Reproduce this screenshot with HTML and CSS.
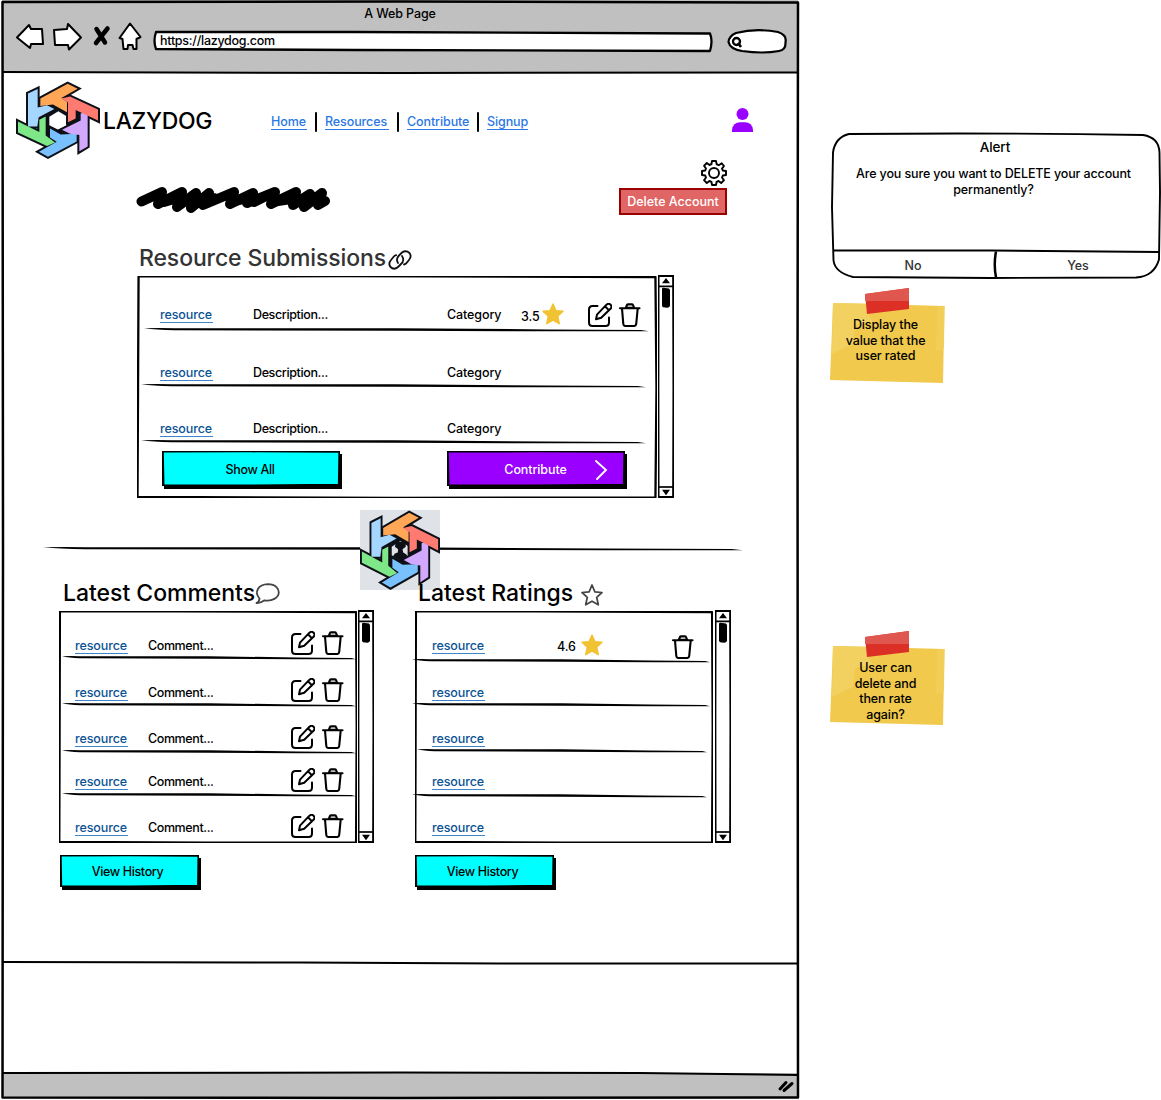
FILE: index.html
```html
<!DOCTYPE html>
<html lang="en">
<head>
<meta charset="utf-8">
<title>LAZYDOG</title>
<link rel="stylesheet" href="styles.css">
</head>
<body>
<svg class="defs" aria-hidden="true">
  <defs>
    <g id="arms">
      <path fill="#ffa657" d="M91 70 173 25 203 40 154 68 171 80V111L129 88 91 92Z"/>
      <path fill="#a5d6ff" d="M54 55 83 41V97L111 90 133 101 86 126 82 154H54Z"/>
      <path fill="#7ee787" d="M24 139 88 171V134L107 124V181L135 202 111 213 24 172Z"/>
      <path fill="#79c0ff" d="M120 160 152 178 200 176V199L114 245 87 230 140 200 120 187Z"/>
      <path fill="#d2a8ff" d="M212 115 233 110V214L208 229V180L180 176 156 164 212 136Z"/>
      <path fill="#ff7b72" d="M154 70 180 64 264 103V136L197 104V130L174 141V82Z"/>
    </g>
  </defs>
  <symbol id="logo" viewBox="18 17 252 235" preserveAspectRatio="none">
    <path fill="#0d1117" fill-rule="evenodd" d="M88 72 165 60 215 108 208 182 150 206 86 168Z M118 125V150L145 164 171 150V124L145 108Z"/>
    <use href="#arms" stroke="#0d1117" stroke-width="12"/>
    <use href="#arms"/>
  </symbol>
  <symbol id="edit" viewBox="0 0 24 24">
    <g fill="none" stroke="#000" stroke-width="2" stroke-linecap="round" stroke-linejoin="round">
      <path d="M9.500 3H4.500Q1 3 1 6.500V19.500Q1 23 4.500 23H17.500Q21 23 21 19.500V14.500"/>
      <path d="M8 16.200 9 11.600 18.200 1.900Q20.700-.2 22.600 1.700 24.400 3.600 22.500 5.800L13.200 14.800Z M17 3.200 20.800 7.100"/>
    </g>
  </symbol>
  <symbol id="trash" viewBox="0 0 22 24">
    <g fill="none" stroke="#000" stroke-width="2.100" stroke-linecap="round" stroke-linejoin="round">
      <path d="M1 5.200H20.500M3 5.500 4.300 21Q4.500 23 6.500 23H15Q17 23 17.200 21L18.700 5.500"/>
      <path fill="#bbb" d="M6.800 5 8 2Q8.300 1.200 9.300 1.200H12.700Q13.700 1.200 14 2L15.200 5Z"/>
    </g>
  </symbol>
  <symbol id="star" viewBox="0 0 22 22">
    <path fill="#f1c232" stroke="#f1c232" stroke-width="1.400" stroke-linejoin="round" d="M11 1 13.900 7.600 21 8.300 15.700 13.200 17.300 20.700 11 17.100 4.700 20.700 6.300 13.200 1 8.300 8.100 7.600Z"/>
  </symbol>
  <symbol id="frame" viewBox="0 0 100 100" preserveAspectRatio="none">
    <path fill="none" stroke="#000" stroke-width="2.300" stroke-linejoin="round" vector-effect="non-scaling-stroke" d="M.3.2 40 .1 99.700.5 99.900 50 99.700 99.800 50 99.900.1 99.500.2 50Z"/>
  </symbol>
  <symbol id="bar" viewBox="0 0 100 100" preserveAspectRatio="none">
    <path fill="none" stroke="#000" stroke-width="2.100" stroke-linejoin="round" vector-effect="non-scaling-stroke" d="M3 .3 95 .4 97 50 95 99.600 3 99.500 2 50Z"/>
  </symbol>
  <symbol id="rule" viewBox="0 0 500 4" preserveAspectRatio="none">
    <path d="M0 .3Q10 0 30 .2L250 .3 400 1.400 492 1.900 500 3.200 400 3.300 250 2.700 30 2.300Q12 2 0 .3Z"/>
  </symbol>
  <symbol id="button" viewBox="0 0 100 100" preserveAspectRatio="none">
    <path fill="currentColor" stroke="#000" stroke-width="2.500" vector-effect="non-scaling-stroke" d="M.3 1 50 .3 99.800 1.500 99.500 97 50 99.300.7 98.500Z"/>
  </symbol>
  <symbol id="scroll-up" viewBox="0 0 16 36">
    <path fill="none" stroke="#000" stroke-width="1.700" d="M1 1H15M1 11.300H15"/>
    <path d="M4 8.200 8 3 12 8.200Z"/>
    <path d="M4 14Q4 12.600 5.500 12.700L11 13.400 12 15V31Q11 33 9 32.800L5 32.200 4 31Z"/>
  </symbol>
  <symbol id="scroll-down" viewBox="0 0 16 12">
    <path fill="none" stroke="#000" stroke-width="1.700" d="M1 1H15"/>
    <path d="M4 3.700H12L8 9.300Z"/>
  </symbol>
</svg>

<div class="browser">
  <svg class="browser-ink" viewBox="0 0 800 1100" aria-hidden="true">
    <g fill="none" stroke="#000" stroke-width="2.500" stroke-linejoin="round">
      <path d="M2.500 2 400 1.500 798 2.500 797.500 400 798 1097.500 400 1098 2.500 1097.500 3 550Z"/>
      <path stroke-width="2" d="M3 72 400 73 798 72.500"/>
      <path stroke-width="2" d="M3 962 300 962.500 500 963.500 798 963.500"/>
      <path stroke-width="2" d="M3 1073 400 1072.500 640 1073 798 1075"/>
    </g>
  </svg>
  <header class="chrome">
    <div class="title"><span class="t-page">A Web Page</span></div>
    <div class="controls">
      <svg class="tools" viewBox="0 0 128 30" aria-hidden="true">
        <g fill="#fff" stroke="#000" stroke-width="2" stroke-linejoin="round">
          <path d="M1 15.500 13 3 15 7 26 7 27 22 15 22 14 26Z"/>
          <path d="M38 8 51 7 52 2 65 15.500 53 27.500 52 23 39 23Z"/>
          <path d="M114 1.500 124.500 15 120.500 17 120.500 27 117.500 27 116.500 23 112 23 111.500 27 107.500 27 106.500 17 103.500 16Z"/>
        </g>
        <path fill="none" stroke="#000" stroke-width="4.500" stroke-linecap="round" d="M80.500 7 89 20.500M91.500 6.500 80 21"/>
      </svg>
      <div class="address">
        <svg class="ink" viewBox="0 0 558 20" aria-hidden="true"><path fill="#fff" stroke="#000" stroke-width="2.300" stroke-linejoin="round" d="M2 1 200 1 556 2.500Q559 10 556 20L200 19 2 18Q-1 10 2 1Z"/></svg>
        <span>https://lazydog.com</span>
      </div>
      <svg class="search" viewBox="0 0 60 25" aria-hidden="true">
        <path fill="#fff" stroke="#000" stroke-width="2.200" d="M8 4Q28-1 50 3 59 6 57.500 13 58 21 51 22 35 25 14 22 2 20 .500 13 1 7 8 4Z"/>
        <circle cx="8.500" cy="12.500" r="3.500" fill="none" stroke="#000" stroke-width="2.300"/><path stroke="#000" stroke-width="2.700" d="M10 14 13 18"/>
      </svg>
    </div>
  </header>

  <div class="masthead">
    <svg class="logo"><use href="#logo"/></svg>
    <span class="brand">LAZYDOG</span>
    <nav class="nav">
      <a class="home">Home</a><i></i><a class="res">Resources</a><i></i><a class="con">Contribute</a><i></i><a class="sign">Signup</a>
    </nav>
    <svg class="user" viewBox="0 0 21 24"><circle cx="10.500" cy="6" r="6"/><path d="M0 24V22Q1 14.300 8 14.300H13Q20 14.300 21 22V24Z"/></svg>
  </div>

  <div class="profile">
    <svg class="scribble" viewBox="0 0 196 30"><path fill="none" stroke="#000" stroke-width="10" stroke-linecap="round" stroke-linejoin="round" d="M5.500 16.500 26 7 22 19 46 7 41 22 60 8 55 23 73 8 67 20 98 7 94 19 117 8 111 18 139 7 135 19 160 7 157 20 174 9 168 22 186 8 182 20 189 16M28 17 38 14M46 16 60 17 78 13M100 16 107 14M118 17 128 12M142 16 155 14 172 16 184 16"/></svg>
    <div class="settings">
      <svg class="gear" viewBox="0 0 26 26"><g fill="none" stroke="#000" stroke-width="1.900" stroke-linejoin="round"><circle cx="13" cy="13" r="5"/><path d="M11 1H15L15.700 4.300 17.800 5.200 20.700 3.300 23 6 21 8.600 21.800 10.500 25 11V15L21.800 15.500 21 17.500 23 20.200 20.200 23 17.500 21 15.600 21.800 15 25H11L10.400 21.800 8.500 21 5.800 23 3 20.200 5 17.500 4.200 15.500 1 15V11L4.200 10.500 5 8.500 3 5.800 5.800 3 8.500 5 10.400 4.200Z"/></g></svg>
      <div class="delete">Delete Account</div>
    </div>
  </div>

  <section class="submissions">
    <h2 class="gray"><span class="t-sub">Resource Submissions</span>
      <svg class="link" viewBox="0 0 24 20"><g fill="none" stroke="#111" stroke-width="1.800" stroke-linecap="round"><path d="M10 13Q7.500 9 11 5.500L14 2.500Q18-.2 21.500 3 24 6.500 21 10L18 13.500Q17 14.300 16 14.500"/><path d="M14 6Q17 10.500 13 14L10 17Q6 20.500 2.500 17 0 13.500 3 10L6 6.300Q7 5.300 8.200 5.200"/></g></svg>
    </h2>
    <div class="pane">
      <div class="list wide">
        <svg class="ink"><use href="#frame"/></svg>
        <div class="row"><a>resource</a><span class="desc">Description...</span><span class="cat">Category</span><span class="rate">3.5</span><svg class="star"><use href="#star"/></svg><svg class="edit"><use href="#edit"/></svg><svg class="trash"><use href="#trash"/></svg><svg class="rule"><use href="#rule"/></svg></div>
        <div class="row"><a>resource</a><span class="desc">Description...</span><span class="cat">Category</span><svg class="rule"><use href="#rule"/></svg></div>
        <div class="row"><a>resource</a><span class="desc">Description...</span><span class="cat">Category</span><svg class="rule"><use href="#rule"/></svg></div>
        <div class="actions">
          <div class="btn"><svg class="ink"><use href="#button"/></svg><span class="t-show">Show All</span></div>
          <div class="btn violet"><svg class="ink"><use href="#button"/></svg><span class="t-con">Contribute</span><svg class="chevron" viewBox="0 0 12 20"><path fill="none" stroke="#fff" stroke-width="1.900" stroke-linecap="round" d="M1 1 11 10 2 19"/></svg></div>
        </div>
      </div>
      <div class="scrollbar"><svg class="ink"><use href="#bar"/></svg><svg class="up"><use href="#scroll-up"/></svg><svg class="down"><use href="#scroll-down"/></svg></div>
    </div>
  </section>

  <div class="divider">
    <svg class="rule"><use href="#rule"/></svg>
    <div class="emblem"><svg viewBox="18 17 252 235" preserveAspectRatio="none"><use href="#logo" x="18" y="17" width="252" height="235"/><path fill="#0d1117" d="M130 114 138 110H152L162 117V125L152 132 154 142 162 146 168 152 145 166 122 153 128 145 137 142 138 132 128 125Z"/></svg></div>
  </div>

  <div class="columns">
    <section>
      <h2><span class="t-com">Latest Comments</span><svg class="bubble" viewBox="0 0 25 22"><path fill="none" stroke="#444" stroke-width="1.800" stroke-linejoin="round" d="M4.500 15.500C-1 9 3 1.500 13 1.200 21 1.200 24 6 23.800 9.500 23.500 15 17 18.500 9.500 17.300 6.500 19.500 4 20.300 1.500 20 4 18.500 4.500 17 4.500 15.500Z"/></svg></h2>
      <div class="pane">
        <div class="list comments">
          <svg class="ink"><use href="#frame"/></svg>
          <div class="row"><a>resource</a><span class="comment">Comment...</span><svg class="edit"><use href="#edit"/></svg><svg class="trash"><use href="#trash"/></svg><svg class="rule"><use href="#rule"/></svg></div>
          <div class="row"><a>resource</a><span class="comment">Comment...</span><svg class="edit"><use href="#edit"/></svg><svg class="trash"><use href="#trash"/></svg><svg class="rule"><use href="#rule"/></svg></div>
          <div class="row"><a>resource</a><span class="comment">Comment...</span><svg class="edit"><use href="#edit"/></svg><svg class="trash"><use href="#trash"/></svg><svg class="rule"><use href="#rule"/></svg></div>
          <div class="row"><a>resource</a><span class="comment">Comment...</span><svg class="edit"><use href="#edit"/></svg><svg class="trash"><use href="#trash"/></svg><svg class="rule"><use href="#rule"/></svg></div>
          <div class="row"><a>resource</a><span class="comment">Comment...</span><svg class="edit"><use href="#edit"/></svg><svg class="trash"><use href="#trash"/></svg></div>
        </div>
        <div class="scrollbar"><svg class="ink"><use href="#bar"/></svg><svg class="up"><use href="#scroll-up"/></svg><svg class="down"><use href="#scroll-down"/></svg></div>
      </div>
      <div class="btn history"><svg class="ink"><use href="#button"/></svg><span class="t-hist">View History</span></div>
    </section>
    <section>
      <h2><span class="t-rat">Latest Ratings</span><svg class="outline-star" viewBox="0 0 22 22"><path fill="none" stroke="#444" stroke-width="1.700" stroke-linejoin="round" d="M11 1 13.900 7.800 21 8.500 15.700 13.300 17.300 20.800 11 17.200 4.700 20.800 6.300 13.300 1 8.500 8.100 7.800Z"/></svg></h2>
      <div class="pane">
        <div class="list ratings">
          <svg class="ink"><use href="#frame"/></svg>
          <div class="row"><a>resource</a><span class="rate">4.6</span><svg class="star"><use href="#star"/></svg><svg class="trash"><use href="#trash"/></svg><svg class="rule"><use href="#rule"/></svg></div>
          <div class="row"><a>resource</a><svg class="rule"><use href="#rule"/></svg></div>
          <div class="row"><a>resource</a><svg class="rule"><use href="#rule"/></svg></div>
          <div class="row"><a>resource</a><svg class="rule"><use href="#rule"/></svg></div>
          <div class="row"><a>resource</a></div>
        </div>
        <div class="scrollbar"><svg class="ink"><use href="#bar"/></svg><svg class="up"><use href="#scroll-up"/></svg><svg class="down"><use href="#scroll-down"/></svg></div>
      </div>
      <div class="btn history"><svg class="ink"><use href="#button"/></svg><span class="t-hist">View History</span></div>
    </section>
  </div>
  <footer class="status"><svg viewBox="0 0 16 12"><path stroke="#000" stroke-width="3" stroke-linecap="round" d="M2 9 8 2.500M6 10.500 14 3.500"/></svg></footer>
</div>

<aside class="side">
  <div class="alert">
    <svg class="ink" viewBox="0 0 330 146"><g fill="none" stroke="#000" stroke-width="1.900"><path d="M18 1.500Q160 0 312 2.500 328 5 328.500 20L329 60 328 127Q323 144 305 145L160 145.500 22 144.500Q4 140 2.500 128L1 75 2 20Q4 5 18 1.500Z"/><path d="M2 118 160 118 328 119.500"/><path stroke-width="2.500" d="M165 119Q162.500 132 165 145"/></g></svg>
    <div class="alert-title"><span>Alert</span></div>
    <p><span class="t-ask">Are you sure you want to DELETE your account</span><br><span>permanently?</span></p>
    <div class="choices"><span>No</span><span>Yes</span></div>
  </div>
  <div class="note first">
    <svg class="ink" viewBox="0 0 116 96"><path fill="#f1c94c" d="M3 15 114.500 18 113 95 0 92Z"/><path fill="#f3d161" d="M3 15 52 16 38 26 43 34 25 37 23 56 2 66Z"/><path fill="#f2cd58" d="M107 18 114.500 18 114 60 100 66 106 62Z"/><path fill="#dc3027" d="M35 6 79 0V21L37 26Z"/><path fill="#e0574f" d="M35 6 79 0V13H35Z"/></svg>
    <p>Display the<br>value that the<br>user rated</p>
  </div>
  <div class="note second">
    <svg class="ink" viewBox="0 0 116 96"><path fill="#f1c94c" d="M3 15 114.500 18 113 94 0 91Z"/><path fill="#f3d161" d="M3 15 52 16 38 26 43 34 25 37 23 56 2 66Z"/><path fill="#f2cd58" d="M107 18 114.500 18 114 60 100 66 106 62Z"/><path fill="#dc3027" d="M35 6 79 0V21L37 26Z"/><path fill="#e0574f" d="M35 6 79 0V13H35Z"/></svg>
    <p>User can<br>delete and<br>then rate<br>again?</p>
  </div>
</aside>
</body>
</html>
```

FILE: styles.css
```css
* { box-sizing: border-box; }
body {
  margin: 0;
  width: 1161px;
  height: 1100px;
  display: flex;
  overflow: hidden;
  background: #fff;
  color: #000;
  font: 500 12.5px/16px Inter, "Liberation Sans", sans-serif;
  letter-spacing: -.1px;
  white-space: nowrap;
}
svg { display: block; flex: none; overflow: visible; }
h2, p { margin: 0; }
.defs { position: absolute; width: 0; height: 0; }
.ink { position: absolute; inset: 0; width: 100%; height: 100%; }

.browser { position: relative; width: 800px; height: 1100px; display: flex; flex-direction: column; flex: none; }
.browser-ink { position: absolute; inset: 0; width: 800px; height: 1100px; z-index: 1; }
.chrome { height: 73px; margin: 0 2px; background: #c0c0c0; flex: none; }
.title { height: 22px; padding-top: 6px; text-align: center; }
.controls { display: flex; padding-left: 14px; align-items: flex-start; }
.tools { width: 128px; height: 30px; }
.address { position: relative; width: 558px; height: 20px; margin: 9px 0 0 10px; padding: 2px 0 0 6px; letter-spacing: -.27px; }
.address span { position: relative; }
.search { width: 60px; height: 25px; margin: 7px 0 0 16px; }

.masthead { height: 87px; padding: 8px 47px 0 16px; display: flex; align-items: flex-start; }
.logo { width: 84px; height: 78px; }
.brand { width: 168px; margin-left: 3px; font-size: 23px; font-weight: 450; line-height: 30px; padding-top: 25px; letter-spacing: -.35px; }
.nav { display: flex; padding-top: 32px; }
.nav a { color: #2b78e4; line-height: 17px; border-bottom: 1px solid #2b78e4; height: 17px; }
.nav i { width: 2px; height: 20px; margin: -1px 8px 0; background: #000; border-radius: 1px; }
.home { width: 36px; }
.res { width: 64px; }
.con { width: 62px; }
.sign { width: 41px; }
.user { width: 21px; height: 24px; margin: 27px 0 0 auto; fill: #90f; }

.profile { height: 80px; display: flex; justify-content: space-between; padding: 0 73px 0 136px; }
.scribble { width: 196px; height: 30px; margin-top: 25px; }
.settings { display: flex; flex-direction: column; align-items: flex-end; }
.gear { width: 26px; height: 26px; }
.delete { width: 108px; height: 27px; margin-top: 2px; border: 2.5px solid #900; background: #e06666; color: #fff; text-align: center; line-height: 24px; letter-spacing: 0; }

h2 { display: flex; height: 35px; font-size: 23px; line-height: 37px; font-weight: 450; letter-spacing: -.03px; }
.gray { color: #333; }
.submissions { height: 270px; padding-left: 137px; }
.submissions h2 { padding-left: 2px; letter-spacing: -.12px; }
.t-sub { width: 249px; }
.link { width: 24px; height: 20px; margin-top: 10px; }
.pane { display: flex; }
.list { position: relative; }
.list > .ink { left: 0; width: calc(100% + 1px); }
.wide { width: 519px; height: 222px; margin-top: 1px; }
.row { position: relative; display: flex; align-items: flex-end; }
.row a { color: #0b5394; border-bottom: 1px solid #3d85c6; width: 53px; height: 16px; line-height: 16px; flex: none; }
.row .rule { position: absolute; height: 4px; bottom: -2px; }
.wide .row { height: 56px; padding: 0 0 5px 23px; }
.wide .row:nth-child(2) { height: 54px; padding-bottom: 7px; }
.wide .rule { left: 4px; width: 505px; }
.wide .row:nth-child(2) .rule { left: 7px; }
.desc { width: 194px; margin-left: 40px; letter-spacing: -.37px; }
.cat { width: 74px; }
.rate { width: 20px; }
.star { width: 22px; height: 22px; }
.edit { width: 24px; height: 24px; }
.trash { width: 22px; height: 24px; }
.wide .row .rate { margin-bottom: -2px; }
.wide .star { margin: 0 24px -2px 1px; }
.wide .edit { margin: 0 7px -4px 0; }
.wide .trash { margin-bottom: -4px; }
.actions { display: flex; gap: 107px; padding: 9px 0 0 25px; }
.btn { position: relative; width: 178px; height: 35px; color: #0ff; display: flex; align-items: center; justify-content: center; box-shadow: 2px 3px 0 #000; }
.btn span { position: relative; color: #000; padding-top: 2px; }
.t-show, .t-hist { letter-spacing: -.35px; }
.t-show { margin-right: 2px; }
.btn.violet { color: #90f; }
.btn.violet span { color: #fff; margin-right: 1px; }
.chevron { position: absolute; right: 18px; top: 9px; width: 12px; height: 20px; }
.scrollbar { position: relative; width: 16px; margin-left: 2px; display: flex; flex-direction: column; justify-content: space-between; }
.up { width: 16px; height: 36px; }
.down { width: 16px; height: 12px; }

.divider { position: relative; height: 80px; padding: 37px 0 0 43px; }
.divider .rule { width: 700px; height: 4px; }
.emblem { position: absolute; left: 360px; top: 0; width: 80px; height: 80px; background: #dfe3e8; }
.emblem svg { width: 80px; height: 80px; }
.columns { position: relative; height: 483px; padding-left: 59px; display: flex; gap: 40px; margin-top: -15px; }
.columns section { width: 316px; }
.columns h2 { padding-left: 4px; }
.columns section + section h2 { padding-left: 3px; }
.t-com { width: 192px; }
.t-rat { width: 163px; }
.bubble { width: 25px; height: 22px; margin-top: 8px; }
.outline-star { width: 22px; height: 22px; margin-top: 9px; }
.comments, .ratings { width: 298px; height: 232px; margin-top: 1px; }
.columns .scrollbar { margin-left: 1px; }
.columns section + section .scrollbar { margin-left: 2px; }
.columns .list > .ink { width: 100%; }
.comments .row, .ratings .row { height: 47px; padding: 0 0 4px 16px; }
.comments .row:nth-child(4), .ratings .row:nth-child(4) { padding-bottom: 5px; }
.comments .row:nth-child(5), .ratings .row:nth-child(5) { height: 43px; padding-bottom: 5px; }
.comments .row:nth-child(6), .ratings .row:nth-child(6) { padding-bottom: 6px; }
.comments .rule { left: 3px; width: 294px; }
.comment { width: 143px; margin-left: 20px; letter-spacing: -.4px; }
.comments .edit { margin: 0 7px -1px 0; }
.comments .trash { margin-bottom: -1px; }
.comments .row:nth-child(n+4) svg:not(.rule) { margin-bottom: -2px; }
.ratings .row { padding-left: 17px; }
.ratings .row:nth-child(2) { height: 50px; padding-bottom: 7px; }
.ratings .row:nth-child(3) { height: 44px; }
.ratings .row:nth-child(4) { height: 46px; padding-bottom: 4px; }
.ratings .row:nth-child(5) { height: 45px; padding-bottom: 6px; }
.ratings .row:nth-child(6) { height: 46px; }
.ratings .rule { left: -3px; width: 298px; }
.ratings .row:nth-child(4) .rule { left: 2px; width: 290px; }
.ratings .row:nth-child(5) .rule { width: 295px; }
.ratings .rate { margin: 0 0 -1px 72px; width: 24px; }
.ratings .star { margin-bottom: -2px; }
.ratings .trash { margin: 0 0 -5px 69px; }
.btn.history { width: 139px; height: 32px; margin: 12px 0 0 1px; }
section + section .btn.history { margin-left: 0; }
.history span { margin-right: 4px; padding-top: 1px; }
.status { min-height: 24px; margin: auto 2px 2px; background: #c0c0c0; display: flex; justify-content: flex-end; align-items: center; padding-right: 4px; flex: none; height: 25px; }
.status svg { width: 16px; height: 12px; }

.side { width: 361px; padding: 132px 0 0 31px; }
.alert { position: relative; width: 330px; height: 147px; text-align: center; padding-top: 7px; }
.alert-title { font-size: 13.5px; height: 27px; padding-right: 2px; }
.alert p { padding-right: 5px; height: 84px; }
.t-ask { letter-spacing: -.13px; }
.choices { display: grid; grid-template-columns: 164px 166px; color: #333; line-height: 32px; letter-spacing: 0; }
.note { position: relative; width: 116px; height: 96px; padding: 29px 5px 0 0; text-align: center; line-height: 15.7px; }
.note p { position: relative; }
.first { margin: 9px 0 0 -1px; }
.second { margin: 247px 0 0 -1px; }
```
